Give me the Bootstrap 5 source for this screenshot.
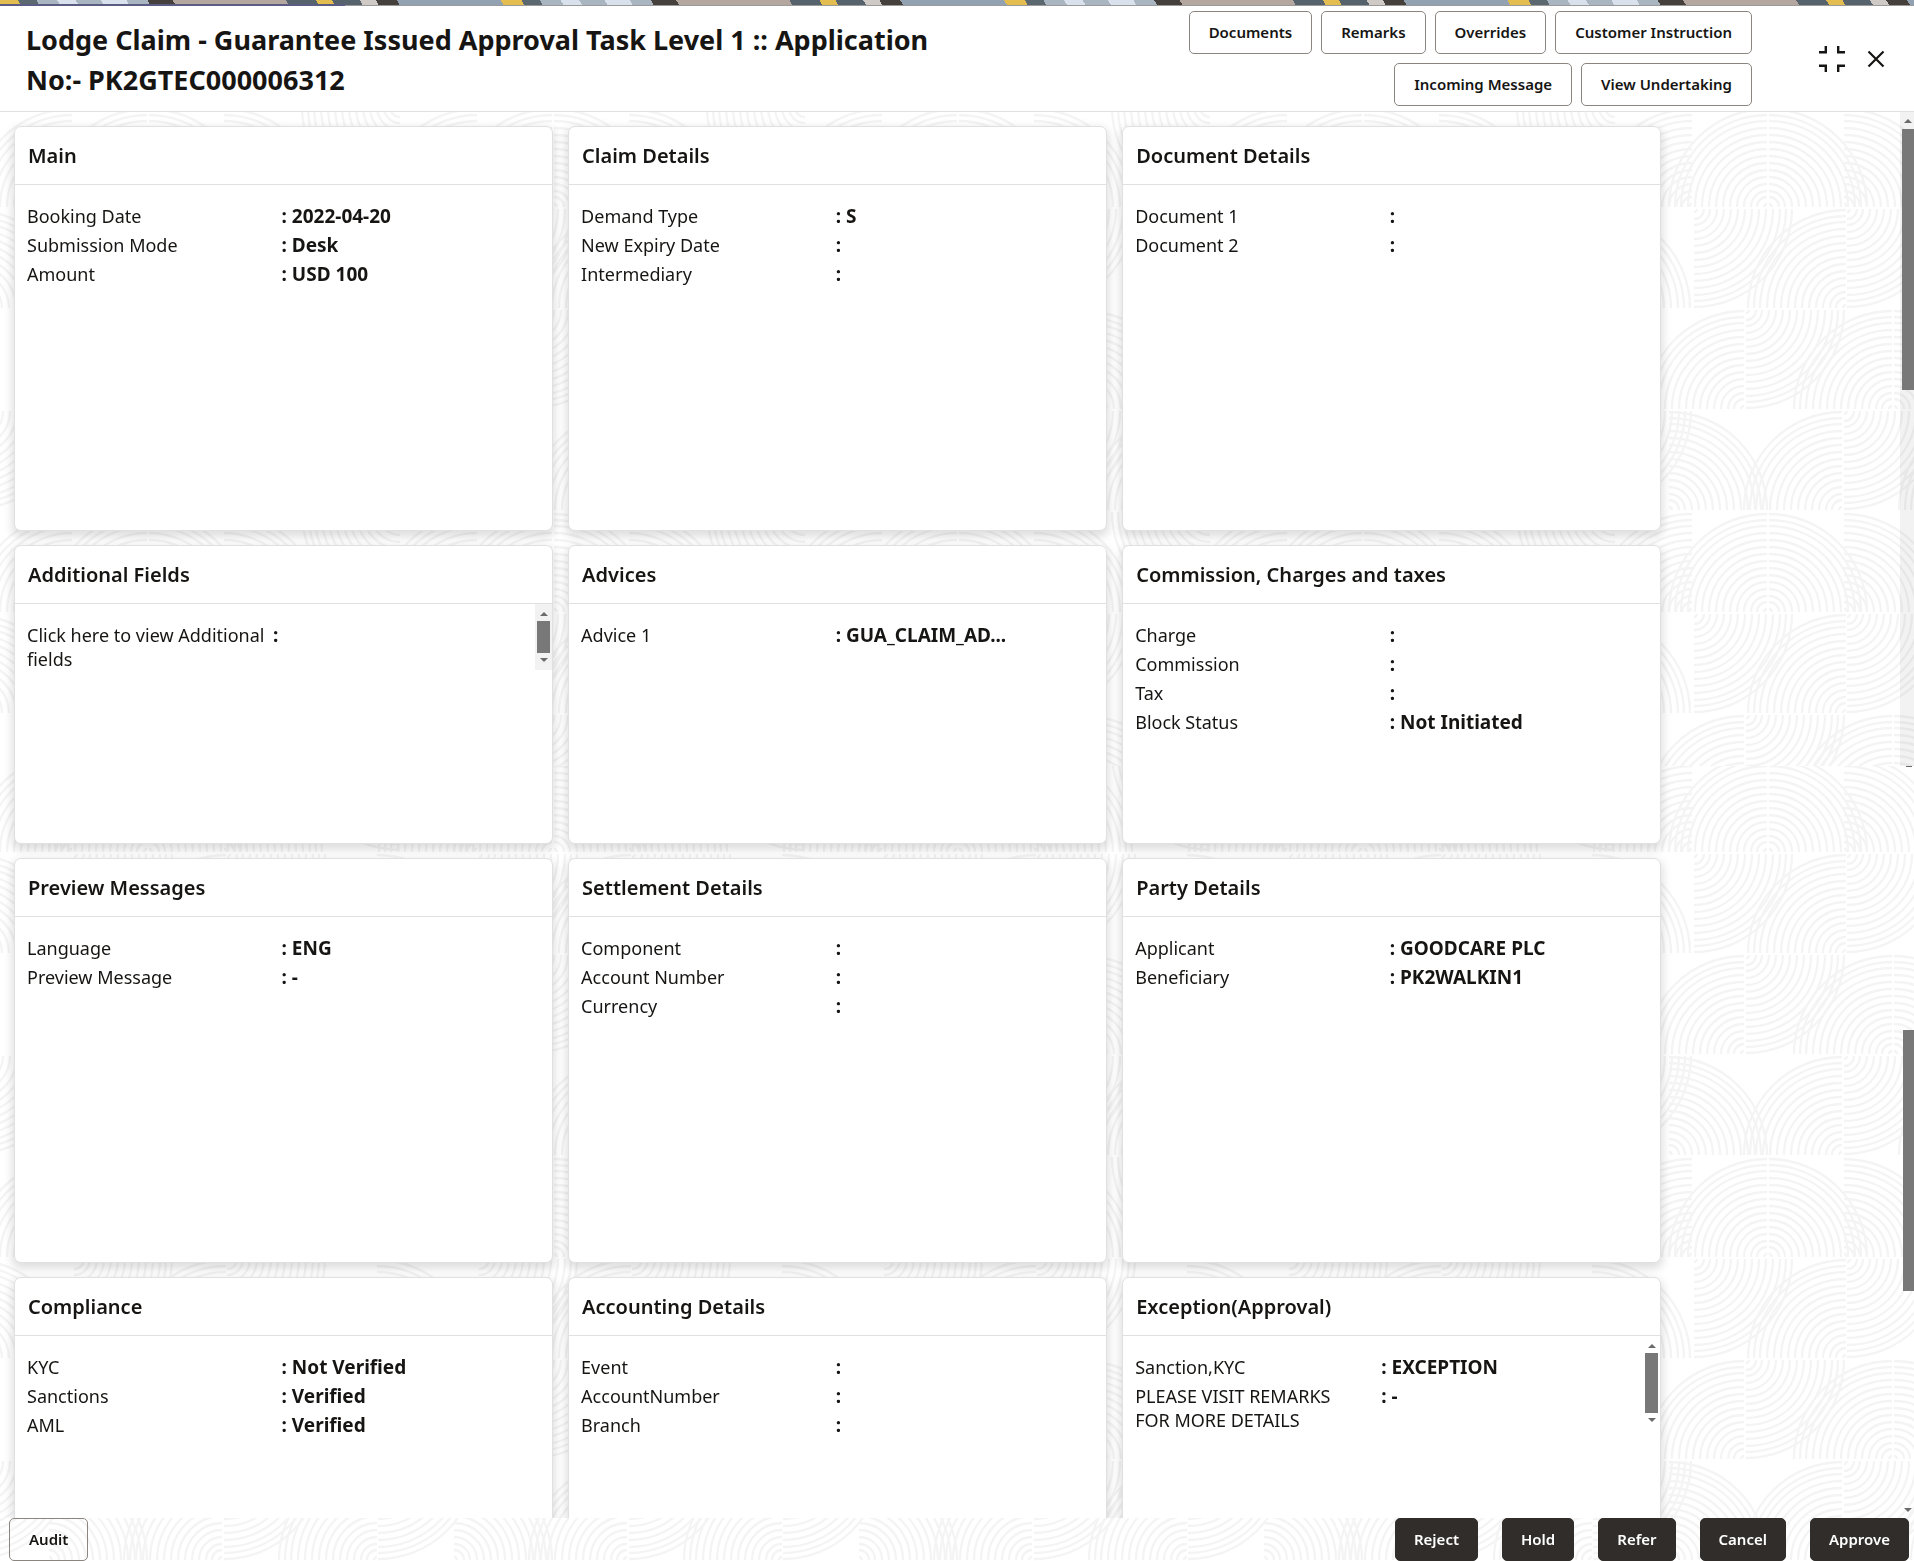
<!DOCTYPE html>
<html lang="en">
<head>
<meta charset="utf-8">
<meta name="viewport" content="width=device-width, initial-scale=1">
<title>Lodge Claim - Guarantee Issued Approval</title>
<link href="https://cdn.jsdelivr.net/npm/bootstrap@5.3.0/dist/css/bootstrap.min.css" rel="stylesheet">
<style>
  :root { --ink: #161513; --line: #e0e0e0; --dark: #312d2a; }
  body { font-family: "Noto Sans", "Open Sans", sans-serif; color: var(--ink); background: #fff; }

  /* woven strip above the dialog */
  .strip {
    height: 6px;
    border-bottom: 1px solid #9a9a9a;
    background: repeating-linear-gradient(60deg,
      #e3bd50 0 18px, #5b6870 18px 34px, #a9b5c1 34px 52px, #d9e2ec 52px 68px,
      #a9b5c1 68px 90px, #d9e2ec 90px 112px, #a9b5c1 112px 130px, #45403c 130px 152px,
      #b3a79f 152px 250px, #56636c 250px 276px, #e3bd50 276px 290px, #56636c 290px 314px,
      #cfcac5 314px 328px, #45403c 328px 346px, #93a2b2 346px 436px);
  }
  .strip-progress { width: 18%; height: 6px; border-bottom: 2px solid #5a5c84; }

  .topbar { border-bottom: 1px solid var(--line); min-height: 106px; background: #fff; padding-left: 26px; padding-right: 28px; }
  .task-title { font-size: 27px; line-height: 40px; font-weight: 700; width: 50%; padding-top: 2px; }
  .actions { width: 600px; gap: 9px; margin-right: 66px; }
  .btn-line, .btn-ink { font-size: 15px; line-height: 21px; font-weight: 600; padding: 10px 19px; border-radius: 5px; }
  .btn-line { --bs-btn-color: var(--ink); --bs-btn-border-color: #8b8580; --bs-btn-bg: #fff; --bs-btn-hover-bg: #f3f3f3; --bs-btn-hover-border-color: #8b8580; }
  .btn-see { --bs-btn-bg: transparent; }
  .btn-ink { padding: 10px 18px; --bs-btn-color: #fff; --bs-btn-bg: var(--dark); --bs-btn-border-color: var(--dark); --bs-btn-hover-color: #fff; --bs-btn-hover-bg: #4a4541; }
  .btn-icon { line-height: 0; color: var(--ink); }
  .btn-restore { margin-right: 20px; }

  .backdrop-art { z-index: -1; }
  .board {
    display: grid; grid-template-columns: repeat(3, 1fr); gap: 14px 15px;
    width: 86.7%; margin: 14px 0 0 14px;
  }
  .tile { border: 1px solid var(--line); border-radius: 7px; background: #fff; box-shadow: 0 4px 10px 2px rgba(0, 0, 0, .13); min-height: 405px; }
  .tile-short { min-height: 299px; }
  .tile-head { font-size: 20px; line-height: 24px; font-weight: 600; padding: 17px 13px 16px; border-bottom: 1px solid var(--line); margin: 0; }
  .pairs { padding: 19px 16px 0 12px; margin: 0; font-size: 18px; line-height: 24px; }
  .pair { margin-bottom: 5px; }
  .pair dt { width: 50%; font-weight: 400; }
  .pair dd { width: 50%; margin: 0; font-weight: 700; font-size: 19px; }
  .pair dd::before { content: ": "; }

  .scroller { width: 17px; padding: 8px 0; background: #f2f2f2; }
  .scroller-clear { background: transparent; }
  .scroller .thumb { width: 13px; background: #787878; margin: 5px 0; }
  .up, .down { width: 0; height: 0; border: 4px solid transparent; }
  .up { border-top: 0; border-bottom: 4px solid #6b6b6b; }
  .down { border-bottom: 0; border-top: 4px solid #6b6b6b; }
  .h-small { height: 66px; }
  .h-mid { height: 94px; }

  .rail { width: 14px; }
  .rail-part { background: rgba(0, 0, 0, .05); flex: 0 0 654px; padding-top: 7px; }
  .rail .thumb { width: 12px; height: 261px; background: #787878; }
  .rail-part .thumb { margin-top: 6px; }
  .rail-end { padding-bottom: 6px; }
  .rail-end .thumb { width: 11px; margin: 263px 0 auto; }
  .dash { width: 6px; height: 1px; background: #6b6b6b; }
  .rail .up, .rail .down, .dash { margin-right: 2px; }
  .footbar { padding: 0 5px 0 9px; }
  .footbar .group { gap: 24px; }
</style>
<script src="https://cdn.jsdelivr.net/npm/bootstrap@5.3.0/dist/js/bootstrap.bundle.min.js" defer></script>
</head>
<body class="vh-100 d-flex flex-column overflow-hidden">

<svg class="backdrop-art position-fixed top-0 start-0 w-100 h-100" aria-hidden="true">
  <defs>
    <g id="q" fill="none" stroke="#f4f4f4" stroke-width="2.3">
      <path d="M0-3A3 3 0 0 1 3 0M0-10A10 10 0 0 1 10 0M0-16A16 16 0 0 1 16 0M0-23A23 23 0 0 1 23 0M0-30A30 30 0 0 1 30 0M0-37A37 37 0 0 1 37 0M0-44A44 44 0 0 1 44 0M0-51A51 51 0 0 1 51 0M0-58A58 58 0 0 1 58 0M0-65A65 65 0 0 1 65 0M0-72A72 72 0 0 1 72 0M0-79A79 79 0 0 1 79 0M0-86A86 86 0 0 1 86 0M0-92A92 92 0 0 1 92 0M0-98A98 98 0 0 1 98 0"/>
    </g>
    <g id="arches">
      <use href="#q" transform="translate(107 101) scale(-1 1)"/>
      <use href="#q" transform="translate(109 101)"/>
      <use href="#q" transform="translate(184 101)"/>
      <use href="#q" transform="translate(32 101) scale(-1 1)"/>
      <use href="#q" transform="translate(437 101) scale(-1 1)"/>
      <use href="#q" transform="translate(360 1) scale(-1 -1)"/>
      <use href="#q" transform="translate(34 103) scale(1 -1)"/>
      <use href="#q" transform="translate(186 202) scale(-1 1)"/>
      <use href="#q" transform="translate(187 103) scale(1 -1)"/>
      <use href="#q" transform="translate(-68 202)"/>
      <use href="#q" transform="translate(337 202)"/>
      <use href="#q" transform="translate(84 303) scale(-1 1)"/>
      <use href="#q" transform="translate(489 303) scale(-1 1)"/>
      <use href="#q" transform="translate(86 204) scale(1 -1)"/>
      <use href="#q" transform="translate(232 303) scale(-1 1)"/>
      <use href="#q" transform="translate(234 303)"/>
      <use href="#q" transform="translate(9 404)"/>
      <use href="#q" transform="translate(-67 305) scale(1 -1)"/>
      <use href="#q" transform="translate(338 305) scale(1 -1)"/>
      <use href="#q" transform="translate(182 404) scale(-1 1)"/>
      <use href="#q" transform="translate(184 305) scale(1 -1)"/>
      <use href="#q" transform="translate(337 404) scale(-1 1)"/>
    </g>
    <pattern id="weaveTop" width="405" height="405" patternUnits="userSpaceOnUse" patternTransform="translate(40 106)"><use href="#arches"/></pattern>
    <pattern id="weaveLow" width="405" height="405" patternUnits="userSpaceOnUse" patternTransform="translate(40 751)"><use href="#arches"/></pattern>
  </defs>
  <rect y="112" width="100%" height="654" fill="url(#weaveTop)"/>
  <rect y="766" width="100%" height="100%" fill="url(#weaveLow)"/>
</svg>

<div class="strip flex-shrink-0"><div class="strip-progress"></div></div>

<header class="topbar d-flex align-items-center flex-shrink-0">
  <h1 class="task-title mb-0">Lodge Claim - Guarantee Issued Approval Task Level 1 :: Application No:- PK2GTEC000006312</h1>
  <div class="actions d-flex flex-wrap justify-content-end ms-auto">
    <button type="button" class="btn btn-line">Documents</button>
    <button type="button" class="btn btn-line">Remarks</button>
    <button type="button" class="btn btn-line">Overrides</button>
    <button type="button" class="btn btn-line">Customer Instruction</button>
    <button type="button" class="btn btn-line">Incoming Message</button>
    <button type="button" class="btn btn-line">View Undertaking</button>
  </div>
  <button type="button" class="btn-icon btn-restore border-0 bg-transparent p-0" aria-label="Restore size">
    <svg width="28" height="26" viewBox="0 0 28 26" fill="none" stroke="currentColor" stroke-width="2.4"><path d="M1 6.200h6.800V0M27 6.200h-6.800V0M1 19.800h6.800V26M27 19.800h-6.800V26"/></svg>
  </button>
  <button type="button" class="btn-icon border-0 bg-transparent p-0" aria-label="Close">
    <svg width="20" height="20" viewBox="0 0 20 20" fill="none" stroke="currentColor" stroke-width="2.200"><path d="M2.500 2.500l15 15M17.500 2.500l-15 15"/></svg>
  </button>
</header>

<main class="d-flex flex-grow-1 overflow-hidden">
  <div class="flex-grow-1">
    <div class="board">
      <section class="tile">
        <h2 class="tile-head">Main</h2>
        <dl class="pairs">
          <div class="pair d-flex"><dt>Booking Date</dt><dd>2022-04-20</dd></div>
          <div class="pair d-flex"><dt>Submission Mode</dt><dd>Desk</dd></div>
          <div class="pair d-flex"><dt>Amount</dt><dd>USD 100</dd></div>
        </dl>
      </section>
      <section class="tile">
        <h2 class="tile-head">Claim Details</h2>
        <dl class="pairs">
          <div class="pair d-flex"><dt>Demand Type</dt><dd>S</dd></div>
          <div class="pair d-flex"><dt>New Expiry Date</dt><dd></dd></div>
          <div class="pair d-flex"><dt>Intermediary</dt><dd></dd></div>
        </dl>
      </section>
      <section class="tile">
        <h2 class="tile-head">Document Details</h2>
        <dl class="pairs">
          <div class="pair d-flex"><dt>Document 1</dt><dd></dd></div>
          <div class="pair d-flex"><dt>Document 2</dt><dd></dd></div>
        </dl>
      </section>

      <section class="tile tile-short">
        <h2 class="tile-head">Additional Fields</h2>
        <div class="d-flex">
          <dl class="pairs flex-grow-1">
            <div class="pair d-flex"><dt>Click here to view Additional fields</dt><dd></dd></div>
          </dl>
          <div class="scroller h-small d-flex flex-column align-items-center flex-shrink-0" aria-hidden="true"><div class="up"></div><div class="thumb flex-grow-1"></div><div class="down"></div></div>
        </div>
      </section>
      <section class="tile tile-short">
        <h2 class="tile-head">Advices</h2>
        <dl class="pairs">
          <div class="pair d-flex"><dt>Advice 1</dt><dd>GUA_CLAIM_AD...</dd></div>
        </dl>
      </section>
      <section class="tile tile-short">
        <h2 class="tile-head">Commission, Charges and taxes</h2>
        <dl class="pairs">
          <div class="pair d-flex"><dt>Charge</dt><dd></dd></div>
          <div class="pair d-flex"><dt>Commission</dt><dd></dd></div>
          <div class="pair d-flex"><dt>Tax</dt><dd></dd></div>
          <div class="pair d-flex"><dt>Block Status</dt><dd>Not Initiated</dd></div>
        </dl>
      </section>

      <section class="tile">
        <h2 class="tile-head">Preview Messages</h2>
        <dl class="pairs">
          <div class="pair d-flex"><dt>Language</dt><dd>ENG</dd></div>
          <div class="pair d-flex"><dt>Preview Message</dt><dd>-</dd></div>
        </dl>
      </section>
      <section class="tile">
        <h2 class="tile-head">Settlement Details</h2>
        <dl class="pairs">
          <div class="pair d-flex"><dt>Component</dt><dd></dd></div>
          <div class="pair d-flex"><dt>Account Number</dt><dd></dd></div>
          <div class="pair d-flex"><dt>Currency</dt><dd></dd></div>
        </dl>
      </section>
      <section class="tile">
        <h2 class="tile-head">Party Details</h2>
        <dl class="pairs">
          <div class="pair d-flex"><dt>Applicant</dt><dd>GOODCARE PLC</dd></div>
          <div class="pair d-flex"><dt>Beneficiary</dt><dd>PK2WALKIN1</dd></div>
        </dl>
      </section>

      <section class="tile">
        <h2 class="tile-head">Compliance</h2>
        <dl class="pairs">
          <div class="pair d-flex"><dt>KYC</dt><dd>Not Verified</dd></div>
          <div class="pair d-flex"><dt>Sanctions</dt><dd>Verified</dd></div>
          <div class="pair d-flex"><dt>AML</dt><dd>Verified</dd></div>
        </dl>
      </section>
      <section class="tile">
        <h2 class="tile-head">Accounting Details</h2>
        <dl class="pairs">
          <div class="pair d-flex"><dt>Event</dt><dd></dd></div>
          <div class="pair d-flex"><dt>AccountNumber</dt><dd></dd></div>
          <div class="pair d-flex"><dt>Branch</dt><dd></dd></div>
        </dl>
      </section>
      <section class="tile">
        <h2 class="tile-head">Exception(Approval)</h2>
        <div class="d-flex">
          <dl class="pairs flex-grow-1">
            <div class="pair d-flex"><dt>Sanction,KYC</dt><dd>EXCEPTION</dd></div>
            <div class="pair d-flex"><dt>PLEASE VISIT REMARKS<br>FOR MORE DETAILS</dt><dd>-</dd></div>
          </dl>
          <div class="scroller scroller-clear h-mid d-flex flex-column align-items-center flex-shrink-0" aria-hidden="true"><div class="up"></div><div class="thumb flex-grow-1"></div><div class="down"></div></div>
        </div>
      </section>
    </div>
  </div>
  <div class="rail d-flex flex-column flex-shrink-0" aria-hidden="true">
    <div class="rail-part d-flex flex-column align-items-end"><div class="up"></div><div class="thumb"></div></div>
    <div class="rail-end d-flex flex-column align-items-end flex-grow-1">
      <div class="dash"></div>
      <div class="thumb"></div>
      <div class="down"></div>
    </div>
  </div>
</main>

<footer class="footbar d-flex justify-content-between flex-shrink-0">
  <button type="button" class="btn btn-line btn-see">Audit</button>
  <div class="group d-flex">
    <button type="button" class="btn btn-ink">Reject</button>
    <button type="button" class="btn btn-ink">Hold</button>
    <button type="button" class="btn btn-ink">Refer</button>
    <button type="button" class="btn btn-ink">Cancel</button>
    <button type="button" class="btn btn-ink">Approve</button>
  </div>
</footer>
</body>
</html>
